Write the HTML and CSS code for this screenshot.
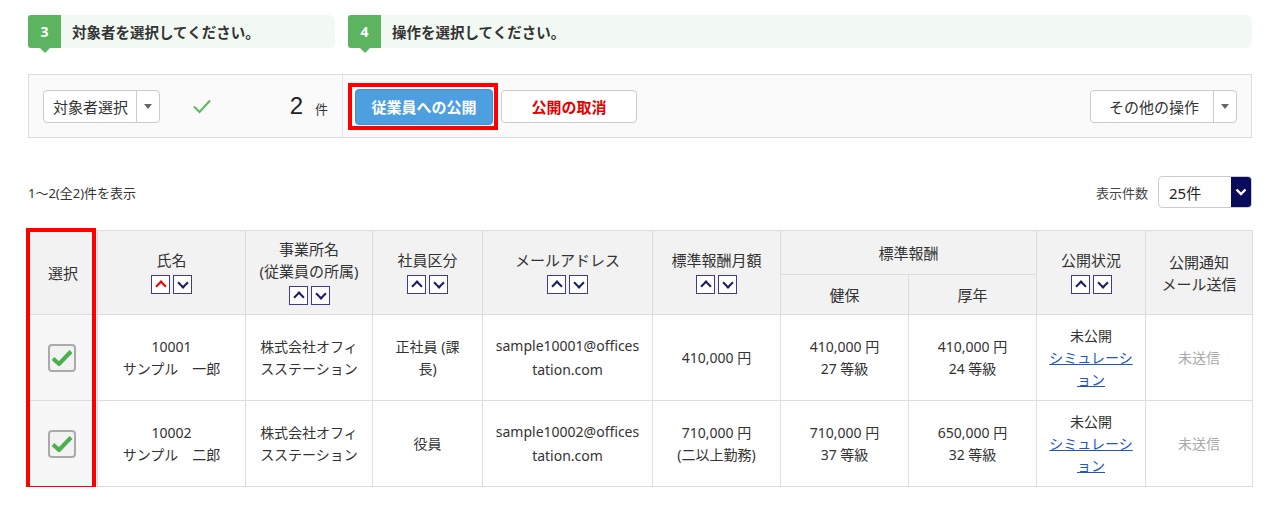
FILE: index.html
```html
<!DOCTYPE html>
<html lang="ja">
<head>
<meta charset="utf-8">
<title>公開</title>
<link rel="stylesheet" href="styles.css">
</head>
<body>
<div class="page">
  <div class="steps">
    <div class="step step-3"><span class="badge">3</span><span class="step-text">対象者を選択してください。</span></div>
    <div class="step step-4"><span class="badge">4</span><span class="step-text">操作を選択してください。</span></div>
  </div>

  <div class="toolbar">
    <div class="tb-left">
      <div class="split-btn">
        <span class="split-label">対象者選択</span>
        <span class="split-caret"><span class="caret"></span></span>
      </div>
      <svg class="check" width="20" height="16" viewBox="0 0 20 16"><path d="M2 8.5 L7.5 14 L18 2.5" fill="none" stroke="#5cb85c" stroke-width="2"/></svg>
      <div class="count"><span class="num">2</span><span class="unit">件</span></div>
    </div>
    <div class="tb-right">
      <span class="highlight"><button class="btn btn-blue">従業員への公開</button></span>
      <button class="btn btn-cancel">公開の取消</button>
      <div class="split-btn other">
        <span class="split-label">その他の操作</span>
        <span class="split-caret"><span class="caret"></span></span>
      </div>
    </div>
  </div>

  <div class="listbar">
    <span class="range">1～2(全2)件を表示</span>
    <div class="per-page">
      <span class="pp-label">表示件数</span>
      <div class="select">
        <span class="select-val">25件</span>
        <span class="select-arrow"><svg width="12" height="8" viewBox="0 0 12 8"><path d="M1.5 1.5 L6 6 L10.5 1.5" fill="none" stroke="#fff" stroke-width="2.4"/></svg></span>
      </div>
    </div>
  </div>

  <div class="table-wrap">
    <table class="grid">
      <colgroup>
        <col style="width:69px"><col style="width:148px"><col style="width:127px"><col style="width:110px"><col style="width:170px"><col style="width:128px"><col style="width:128px"><col style="width:128px"><col style="width:109px"><col style="width:107px">
      </colgroup>
      <thead>
        <tr class="h1">
          <th rowspan="2">選択</th>
          <th rowspan="2">氏名<div class="sort"><span class="sb up active"></span><span class="sb down"></span></div></th>
          <th rowspan="2">事業所名<br>(従業員の所属)<div class="sort"><span class="sb up"></span><span class="sb down"></span></div></th>
          <th rowspan="2">社員区分<div class="sort"><span class="sb up"></span><span class="sb down"></span></div></th>
          <th rowspan="2">メールアドレス<div class="sort"><span class="sb up"></span><span class="sb down"></span></div></th>
          <th rowspan="2">標準報酬月額<div class="sort"><span class="sb up"></span><span class="sb down"></span></div></th>
          <th colspan="2">標準報酬</th>
          <th rowspan="2">公開状況<div class="sort"><span class="sb up"></span><span class="sb down"></span></div></th>
          <th rowspan="2">公開通知<br>メール送信</th>
        </tr>
        <tr class="h2">
          <th>健保</th>
          <th>厚年</th>
        </tr>
      </thead>
      <tbody>
        <tr>
          <td class="sel"><span class="cb"><svg width="22" height="18" viewBox="0 0 22 18"><path d="M2 9.5 L8 15 L20 2.5" fill="none" stroke="#4cae4f" stroke-width="4" stroke-linejoin="round"/></svg></span></td>
          <td>10001<br>サンプル　一郎</td>
          <td>株式会社オフィ<br>スステーション</td>
          <td>正社員 (課<br>長)</td>
          <td class="mail">sample10001@offices<br>tation.com</td>
          <td>410,000 円</td>
          <td>410,000 円<br>27 等級</td>
          <td>410,000 円<br>24 等級</td>
          <td>未公開<br><a href="#" class="link">シミュレーシ<br>ョン</a></td>
          <td class="muted">未送信</td>
        </tr>
        <tr>
          <td class="sel"><span class="cb"><svg width="22" height="18" viewBox="0 0 22 18"><path d="M2 9.5 L8 15 L20 2.5" fill="none" stroke="#4cae4f" stroke-width="4" stroke-linejoin="round"/></svg></span></td>
          <td>10002<br>サンプル　二郎</td>
          <td>株式会社オフィ<br>スステーション</td>
          <td>役員</td>
          <td class="mail">sample10002@offices<br>tation.com</td>
          <td>710,000 円<br>(二以上勤務)</td>
          <td>710,000 円<br>37 等級</td>
          <td>650,000 円<br>32 等級</td>
          <td>未公開<br><a href="#" class="link">シミュレーシ<br>ョン</a></td>
          <td class="muted">未送信</td>
        </tr>
      </tbody>
    </table>
    <div class="col-mark"></div>
  </div>
</div>
</body>
</html>
```

FILE: styles.css
```css
* { box-sizing: border-box; }
html, body { margin: 0; padding: 0; background: #fff; }
body {
  font-family: "Noto Sans", "Noto Sans CJK JP", sans-serif;
  font-size: 14px;
  color: #333;
}
.page { padding: 15px 28px 0 28px; width: 1280px; }

.steps { display: flex; gap: 13px; height: 33px; }
.step {
  display: flex; align-items: center;
  background: #f2f9f2;
  border-radius: 0 6px 6px 0;
  height: 33px;
}
.step-3 { width: 307px; }
.step-4 { flex: 1; }
.badge {
  position: relative;
  width: 33px; height: 33px;
  background: #5cb460;
  color: #fff; font-weight: bold; font-size: 14px;
  display: flex; align-items: center; justify-content: center;
  border-radius: 3px 0 0 3px;
}
.badge::after {
  content: ""; position: absolute; left: 50%; bottom: -5px; margin-left: -5px;
  border-left: 5px solid transparent; border-right: 5px solid transparent;
  border-top: 5px solid #5cb460;
}
.step-text { margin-left: 11px; font-weight: bold; font-size: 14.5px; color: #333; }

.toolbar {
  margin-top: 26px;
  height: 64px;
  border: 1px solid #ddd;
  background: #fafafa;
  display: flex;
}
.tb-left {
  width: 314px; border-right: 1px solid #e4e4e4;
  display: flex; align-items: center; padding-left: 14px; padding-right: 14px;
}
.split-btn {
  display: flex; height: 33px;
  border: 1px solid #ccc; border-radius: 4px; background: #fff;
  align-items: stretch;
}
.split-label { display: flex; align-items: center; padding: 0 8px 0 9px; font-size: 15px; color: #333; }
.split-caret { width: 23px; border-left: 1px solid #ccc; display: flex; align-items: center; justify-content: center; }
.caret { width: 0; height: 0; border-left: 4px solid transparent; border-right: 4px solid transparent; border-top: 5px solid #666; }
.check { margin-left: 32px; }
.count { margin-left: auto; display: flex; align-items: baseline; }
.num { font-size: 24px; color: #222; font-family: "Liberation Sans", sans-serif; }
.unit { font-size: 13px; margin-left: 12px; color: #333; }

.tb-right { flex: 1; display: flex; align-items: center; padding-left: 5px; padding-right: 14px; gap: 3px; }
.highlight { border: 4px solid #f00; padding: 2px 1px 1px 3px; display: flex; }
.btn {
  font-family: inherit; font-size: 15px; font-weight: bold;
  height: 33px; border-radius: 4px; cursor: pointer;
}
.btn-blue { width: 138px; height: 36px; background: #4d9fe0; color: #fff; border: 1px solid #3f8fd0; }
.btn-cancel { width: 136px; background: #fff; color: #e60000; border: 1px solid #ccc; }
.other { margin-left: auto; }
.other .split-label { padding: 0 14px 0 18px; }

.listbar { display: flex; align-items: center; justify-content: space-between; margin-top: 38px; height: 32px; }
.range { font-size: 13px; color: #333; }
.per-page { display: flex; align-items: center; }
.pp-label { font-size: 13px; color: #444; margin-right: 10px; }
.select {
  width: 94px; height: 32px; display: flex;
  border: 1px solid #ccc; border-radius: 4px; overflow: hidden; background: #fff;
}
.select-val { flex: 1; display: flex; align-items: center; padding-left: 10px; font-size: 15px; color: #222; }
.select-arrow { width: 20px; background: #0b0b5c; display: flex; align-items: center; justify-content: center; }

.table-wrap { position: relative; margin-top: 22px; }
.grid { border-collapse: collapse; table-layout: fixed; width: 1224px; }
.grid th, .grid td { border: 1px solid #ddd; text-align: center; vertical-align: middle; padding: 0 4px; }
.grid th { background: #f2f2f2; font-weight: normal; font-size: 15px; color: #333; line-height: 22px; }
.grid tr.h1 { height: 44px; }
.grid tr.h2 { height: 40px; }
.grid tbody tr { height: 86px; }
.grid td { line-height: 22px; font-size: 14px; color: #333; }
.grid td.sel { background: #f7f7f7; }
.grid td.mail { line-height: 24px; padding: 0; }
.grid td.muted { color: #aaa; }
.link { color: #2255cc; text-decoration: underline; }
.sort { display: flex; justify-content: center; gap: 3px; margin-top: 4px; padding-bottom: 2px; }
.sb {
  width: 19px; height: 19px; border: 1px solid #3c3c94; background: #fff;
  position: relative; display: inline-block;
  box-shadow: inset 0 0 0 1px #fff;
}
.sb::after {
  content: ""; position: absolute; left: 5px; width: 6px; height: 6px;
  border-left: 2px solid #1a1a6e; border-top: 2px solid #1a1a6e;
}
.sb.up::after { top: 6px; transform: rotate(45deg); }
.sb.down::after { top: 3px; transform: rotate(225deg); }
.sb.active::after { border-color: #e00; }
.cb {
  display: inline-flex; width: 28px; height: 28px;
  border: 2px solid #aaa; border-radius: 4px; background: #f2f2f2;
  align-items: center; justify-content: center; vertical-align: middle;
  margin-right: 2px;
}
.col-mark {
  position: absolute; left: -2px; top: -2px; width: 70px; height: 262px;
  border: 4px solid #f00;
}
```
